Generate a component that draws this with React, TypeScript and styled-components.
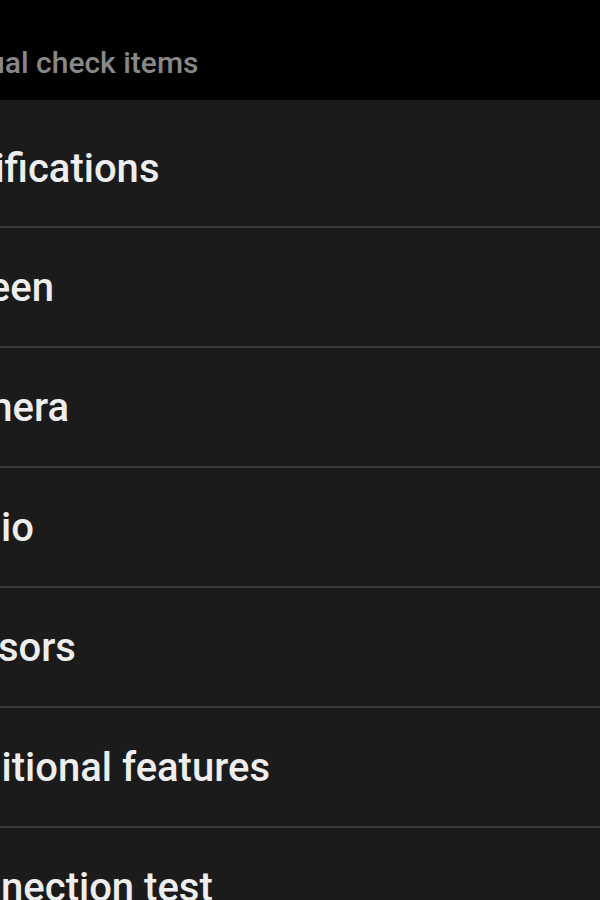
import React from "react";
import styled, { createGlobalStyle } from "styled-components";

const Global = createGlobalStyle`
  html, body { margin: 0; padding: 0; background: #1b1b1b; }
  body { font-family: Roboto, "Noto Sans", sans-serif; overflow: hidden; }
`;

const Screen = styled.div`
  width: 600px;
  height: 900px;
  overflow: hidden;
  background: #1b1b1b;
  display: flex;
  flex-direction: column;
`;

const Header = styled.div`
  height: 100px;
  box-sizing: border-box;
  padding-top: 24px;
  flex: none;
  background: #000;
  display: flex;
  align-items: center;
`;

const HeaderTitle = styled.span`
  margin-left: -71px;
  font-size: 30px;
  font-weight: 500;
  color: #888888;
  white-space: nowrap;
`;

const Row = styled.div<{ $first?: boolean }>`
  height: 118px;
  box-sizing: border-box;
  padding-top: ${(p) => (p.$first ? 10 : 0)}px;
  height: ${(p) => (p.$first ? 128 : 120)}px;
  flex: none;
  display: flex;
  align-items: center;
  border-bottom: 2px solid #393939;
  background: #1b1b1b;
`;

const RowLabel = styled.span`
  margin-left: -70px;
  font-size: 40px;
  font-weight: 500;
  color: #eeeeee;
  white-space: nowrap;
`;

const items = [
  "Notifications",
  "Screen",
  "Camera",
  "Audio",
  "Sensors",
  "Additional features",
  "Connection test",
];

export default function App() {
  return (
    <Screen>
      <Global />
      <Header>
        <HeaderTitle>Manual check items</HeaderTitle>
      </Header>
      {items.map((t, i) => (
        <Row key={t} $first={i === 0}>
          <RowLabel>{t}</RowLabel>
        </Row>
      ))}
    </Screen>
  );
}
